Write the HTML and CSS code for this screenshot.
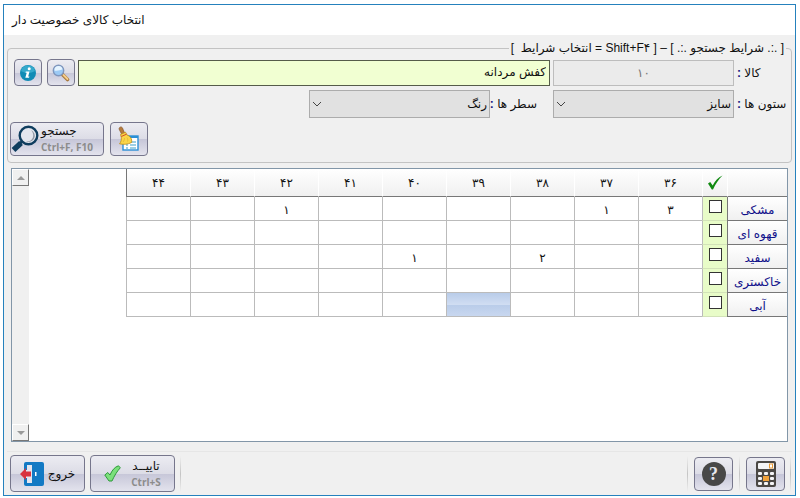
FILE: index.html
```html
<!DOCTYPE html>
<html lang="fa" dir="rtl">
<head>
  <meta charset="UTF-8">
  <meta name="viewport" content="width=device-width, initial-scale=1.0">
  <link rel="stylesheet" href="styles.css">
  <title>انتخاب کالای خصوصیت دار</title>
</head>
<body>
  <div class="window">
    <header class="title_bar">انتخاب کالای خصوصیت دار</header>

    <form class="content">
      <fieldset class="search_box">
        <legend>[ .:. شرایط جستجو .:. ] – [ Shift+F۴ = انتخاب شرایط &nbsp;]</legend>

        <div class="search_row">
          <label class="first_label" for="item_code">کالا <span class="colon">:</span></label>
          <input type="text" class="item_code" id="item_code" value="۱۰" disabled>
          <input type="text" class="item_name" aria-label="نام کالا" value="کفش مردانه">
          <button type="button" class="btn small_btn" aria-label="جستجوی کالا">
            <svg width="18" height="18" viewBox="0 0 18 18">
              <path d="M10.500 10.500l5 5" stroke="#a8793f" stroke-width="3.600" stroke-linecap="round"/>
              <path d="M11.500 11l4 4" stroke="#f6cf8c" stroke-width="1.800" stroke-linecap="round"/>
              <circle cx="6.500" cy="6.500" r="5.200" fill="#9ccaf5" stroke="#7f96bd" stroke-width="1.400"/>
              <path d="M2.500 6.500a4 4 0 0 1 8-1c-2 .2-5 1.800-8 1z" fill="#e6f4ff"/>
            </svg>
          </button>
          <button type="button" class="btn small_btn" aria-label="اطلاعات">
            <svg width="18" height="18" viewBox="0 0 18 18">
              <circle cx="9" cy="9" r="8" fill="#118bb5"/>
              <path d="M2 7a7.200 7.200 0 0 1 14 0c-4 2.500-10 2.500-14 0z" fill="#35a9cc"/>
              <circle cx="10.200" cy="4.700" r="1.500" fill="#fff"/>
              <path d="M6.800 7.500h3.700l-1.300 5h1.300l-.5 1.300H6.300l1.400-5h-1.200z" fill="#fff"/>
            </svg>
          </button>
        </div>

        <div class="search_row">
          <label class="first_label" for="columns">ستون ها <span class="colon">:</span></label>
          <div class="select_wrap">
            <select id="columns"><option>سایز</option></select>
            <svg class="chevron" width="10" height="6" viewBox="0 0 10 6"><path d="M1 1l4 4 4-4" fill="none" stroke="#444"/></svg>
          </div>
          <label class="second_label" for="rows">سطر ها <span class="colon">:</span></label>
          <div class="select_wrap">
            <select id="rows"><option>رنگ</option></select>
            <svg class="chevron" width="10" height="6" viewBox="0 0 10 6"><path d="M1 1l4 4 4-4" fill="none" stroke="#444"/></svg>
          </div>
        </div>

        <div class="search_actions">
          <button type="button" class="btn clear_btn" aria-label="پاک کردن">
            <svg width="24" height="26" viewBox="0 0 24 26">
              <rect x="6" y="10" width="15" height="14" fill="#fff" stroke="#2b8fd6" stroke-width="1.400"/>
              <path d="M6 10h15v2H6z" fill="#2b8fd6"/>
              <path d="M9 19h2M9 22h2M13 16h6M13 19h6M13 22h6" stroke="#3aa0c8" stroke-width="1.200"/>
              <path d="M2 3c0-2 2.500-3 3.500-1l2.500 6-2.800 1.300z" fill="#b57a3c" stroke="#7c4d24" stroke-width=".6"/>
              <path d="M3.500 8.500l5-2.300 1.500 2.800c3.500 1.200 5.200 4 4.600 7.500-3.500 1.900-8 2.300-12.100 1.300 1.700-1.900 2-4.500 1.800-6.500z" fill="#fad548" stroke="#bd8b1c" stroke-width=".8"/>
              <path d="M4.300 10.500L9.500 8.200" stroke="#d34b2a"/>
              <path d="M6 16c1-1 1.500-2.500 1.500-4M10.500 15.500c.5-1.500.3-2.500-.5-4" fill="none" stroke="#dba92f" stroke-width=".6"/>
            </svg>
          </button>
          <button type="button" class="btn search_btn">
            <span class="btn_text"><span>جستجو</span><span class="shortcut">Ctrl+F, F10</span></span>
            <svg width="28" height="28" viewBox="0 0 28 28">
              <path d="M2.500 25l7.500-7" stroke="#0f3d5e" stroke-width="5.500"/>
              <path d="M9 18.500l2-2" stroke="#0f3d5e" stroke-width="3"/>
              <circle cx="17.500" cy="10.500" r="8.800" fill="#e3e6ee" stroke="#0f3d5e" stroke-width="2.400"/>
              <path d="M20 5a6 6 0 0 1-5 11.500c6 1 10-6 5-11.500z" fill="#8f98a5"/>
            </svg>
          </button>
        </div>
      </fieldset>

      <div class="grid_panel">
        <div class="table_area">
          <table class="stock">
            <thead>
              <tr>
                <th class="name_col"></th>
                <th class="check_col">
                  <svg width="16" height="15" viewBox="0 0 16 15"><path d="M1 8.500L3.200 7l2.500 3.500C8 6 11 2.500 15.500.5 11.500 4.500 8.500 9 6 14.500H4.800z" fill="#118a11"/></svg>
                </th>
                <th>۳۶</th><th>۳۷</th><th>۳۸</th><th>۳۹</th><th>۴۰</th><th>۴۱</th><th>۴۲</th><th>۴۳</th><th>۴۴</th>
              </tr>
            </thead>
            <tbody>
              <tr>
                <th><label for="black">مشکی</label></th>
                <td class="check"><input type="checkbox" id="black"></td>
                <td>۳</td><td>۱</td><td></td><td></td><td></td><td></td><td>۱</td><td></td><td></td>
              </tr>
              <tr>
                <th><label for="brown">قهوه ای</label></th>
                <td class="check"><input type="checkbox" id="brown"></td>
                <td></td><td></td><td></td><td></td><td></td><td></td><td></td><td></td><td></td>
              </tr>
              <tr>
                <th><label for="white">سفید</label></th>
                <td class="check"><input type="checkbox" id="white"></td>
                <td></td><td></td><td>۲</td><td></td><td>۱</td><td></td><td></td><td></td><td></td>
              </tr>
              <tr>
                <th><label for="grey">خاکستری</label></th>
                <td class="check"><input type="checkbox" id="grey"></td>
                <td></td><td></td><td></td><td></td><td></td><td></td><td></td><td></td><td></td>
              </tr>
              <tr>
                <th><label for="blue">آبی</label></th>
                <td class="check"><input type="checkbox" id="blue"></td>
                <td></td><td></td><td></td><td class="selected"></td><td></td><td></td><td></td><td></td><td></td>
              </tr>
            </tbody>
          </table>
        </div>
        <div class="scrollbar">
          <button type="button" class="arrow" aria-label="بالا"><svg width="8" height="4" viewBox="0 0 8 4"><path d="M0 4l4-4 4 4z" fill="#999"/></svg></button>
          <button type="button" class="arrow" aria-label="پایین"><svg width="8" height="4" viewBox="0 0 8 4"><path d="M0 0l4 4 4-4z" fill="#999"/></svg></button>
        </div>
      </div>

      <footer class="toolbar">
        <span class="separator"></span>
        <button type="button" class="btn tool_btn" aria-label="ماشین حساب">
          <svg width="20" height="26" viewBox="0 0 20 26">
            <rect width="20" height="26" rx="2" fill="#4b4845"/>
            <rect x="2" y="2" width="16" height="6" rx="1" fill="#f4f4f6"/>
            <rect x="13.500" y="3" width="3" height="4" fill="#fff" stroke="#e99a35"/>
            <g fill="#f4f4f6">
              <rect x="2" y="11" width="4" height="3" rx="1"/><rect x="8" y="11" width="4" height="3" rx="1"/><rect x="14" y="11" width="4" height="3" rx="1"/>
              <rect x="2" y="16" width="4" height="3" rx="1"/><rect x="14" y="16" width="4" height="3" rx="1"/>
              <rect x="2" y="21" width="4" height="3" rx="1"/><rect x="8" y="21" width="4" height="3" rx="1"/><rect x="14" y="21" width="4" height="3" rx="1"/>
            </g>
            <rect x="7" y="15" width="6" height="5" fill="#f0a23c"/>
          </svg>
        </button>
        <span class="separator"></span>
        <button type="button" class="btn tool_btn"><span class="help">?</span></button>
        <span class="separator"></span>
        <span class="spacer"></span>
        <span class="separator"></span>
        <button type="submit" class="btn ok_btn">
          <span class="btn_text"><span>تاییــد</span><span class="shortcut">Ctrl+S</span></span>
          <svg width="17" height="17" viewBox="0 0 17 17"><path d="M.8 10l3-2.500 2.200 2.500C8 5.500 10.500 2 14.500.8l1.800 2C12.800 6.500 10.300 11 8 16H5z" fill="#7be07b" stroke="#2f9a3c"/></svg>
        </button>
        <button type="button" class="btn exit_btn">
          <span>خروج</span>
          <svg width="24" height="24" viewBox="0 0 24 24">
            <path d="M6 0h16a2 2 0 0 1 2 2v20a2 2 0 0 1-2 2H6a2 2 0 0 1-2-2V2a2 2 0 0 1 2-2z" fill="#1279c4"/>
            <path d="M7 3h5v18H7zM4 8h3v8H4z" fill="#e4e5ee"/>
            <path d="M15 10h1.500v4H15z" fill="#fff"/>
            <path d="M0 12l6-6v3.500h5v5H6V18z" fill="#d9333f"/>
          </svg>
        </button>
      </footer>
    </form>
  </div>
</body>
</html>
```
FILE: styles.css
```css
/* Basics */
* {
  box-sizing: border-box;
}

body {
  margin: 0;
  padding: 4px 4px 2px 3px;
  font-family: "Liberation Sans", "DejaVu Sans", sans-serif;
  font-size: 12px;
  line-height: 16px;
  color: #111;
  background-color: #fff;
}

input, select, button {
  font: inherit;
  color: inherit;
}

svg {
  display: block;
  flex: none;
}

/* Window */
.window {
  display: flex;
  flex-direction: column;
  min-height: calc(100vh - 6px);
  border: 1px solid #2581bd;
  background-color: #f0f0f0;
}

.title_bar {
  direction: ltr;
  padding: 7px 8px;
  background-color: #fff;
}

.content {
  display: flex;
  flex-direction: column;
  flex: 1;
  padding: 5px 3px 2px;
}

/* Search conditions */
.search_box {
  display: flex;
  flex-direction: column;
  gap: 4px;
  min-width: 0;
  margin: 0;
  padding: 3px 4px 6px 2px;
  border: 1px solid #c3c3c3;
  border-radius: 4px;
}

.search_box legend {
  margin-right: 1px;
  padding: 0 2px;
}

.search_row {
  display: flex;
  align-items: center;
  gap: 3px;
  padding-left: 4px;
}

.first_label {
  width: 50px;
  text-align: left;
  white-space: nowrap;
}

.second_label {
  width: 57px;
  padding-right: 13px;
  white-space: nowrap;
}

.colon {
  font-weight: bold;
  color: #1a1a80;
}

.item_code, .select_wrap {
  width: 181px;
}

.item_code {
  height: 26px;
  border: 1px solid #bdbdbd;
  background-color: #ebebeb;
  color: #777;
  text-align: center;
}

.item_name {
  flex: 1;
  min-width: 0;
  height: 26px;
  padding: 0 3px 2px;
  border: 1px solid #565c4a;
  background-color: #f1ffd2;
}

.select_wrap {
  position: relative;
}

.select_wrap select {
  width: 100%;
  height: 28px;
  padding: 0 2px;
  border: 1px solid #acacac;
  border-radius: 0;
  background-color: #e1e1e1;
  appearance: none;
}

.chevron {
  position: absolute;
  left: 3px;
  top: 11px;
  pointer-events: none;
}

.search_actions {
  display: flex;
  justify-content: flex-end;
  gap: 6px;
}

/* Buttons */
.btn {
  display: flex;
  justify-content: center;
  align-items: center;
  padding: 0;
  border: 1px solid #76768c;
  border-radius: 4px;
  background: linear-gradient(#ececf2, #dcdce6 50%, #c6c6d8 51%, #e3e3ed);
  cursor: pointer;
}

.btn_text {
  display: flex;
  flex-direction: column;
}

.shortcut {
  direction: ltr;
  font-family: "Open Sans", sans-serif;
  font-size: 10px;
  font-weight: bold;
  color: #8c8c8c;
}

.small_btn {
  width: 28px;
  height: 27px;
}

.small_btn + .small_btn {
  margin-right: 2px;
}

.search_btn {
  justify-content: flex-end;
  gap: 2px;
  width: 94px;
  height: 34px;
}

.search_btn .btn_text {
  align-items: flex-end;
}

.clear_btn {
  width: 38px;
  height: 34px;
}

/* Stock grid */
.grid_panel {
  display: flex;
  flex: 1;
  margin: 5px 4px 0;
  border: 1px solid #8296a8;
  background-color: #fff;
}

.table_area {
  flex: 1;
  min-width: 0;
  overflow: hidden;
}

.stock {
  width: 661px;
  table-layout: fixed;
  border-collapse: separate;
  border-spacing: 0;
  text-align: center;
}

.stock th, .stock td {
  height: 24px;
  padding: 2px 0 0;
  font-weight: normal;
}

.stock thead th {
  height: 28px;
  padding: 0;
  border-left: 1px solid #fff;
  border-bottom: 1px solid #777;
  background: linear-gradient(#fff, #f0f0f0);
}

.stock thead th:last-child {
  border-left-color: #777;
}

.stock .name_col {
  width: 60px;
}

.stock .check_col {
  width: 25px;
}

.check_col svg {
  margin: 0 auto;
}

.stock tbody th {
  border-left: 1px solid #777;
  border-bottom: 1px solid #777;
  background: linear-gradient(#fff, #f0f0f0);
  color: #10108a;
}

.stock td {
  border-left: 1px solid #bbb;
  border-bottom: 1px solid #bbb;
}

.stock .check {
  padding: 0;
  background-color: #e8fcc8;
  border-bottom-color: #d2e2b8;
}

.check input {
  display: block;
  width: 13px;
  height: 13px;
  margin: 0 auto 4px;
  border: 1px solid #333;
  background-color: #fff;
  appearance: none;
}

.check input:checked {
  background-color: #118a11;
}

.stock .selected {
  background: linear-gradient(#b9cce9, #d0ddf2 50%, #b9cce9 51%, #c8d7ef);
}

.scrollbar {
  display: flex;
  flex-direction: column;
  justify-content: space-between;
  width: 17px;
  background-color: #f0f0f0;
}

.arrow {
  display: flex;
  justify-content: center;
  align-items: center;
  width: 17px;
  height: 17px;
  padding: 0;
  border: 1px solid;
  border-color: #fff #777 #777 #fff;
  background-color: #f0f0f0;
}

/* Bottom toolbar */
.toolbar {
  display: flex;
  align-items: center;
  gap: 5px;
  margin-top: 9px;
  padding: 3px 1px 1px 3px;
  border-top: 1px solid #e6e6e6;
}

.spacer {
  flex: 1;
}

.separator {
  width: 1px;
  height: 36px;
  background: linear-gradient(#f0f0f0, #c4c4c4, #f0f0f0);
}

.tool_btn {
  width: 39px;
  height: 34px;
}

.tool_btn + .separator {
  margin: 0 1px;
}

.help {
  width: 24px;
  height: 24px;
  border-radius: 50%;
  background-color: #484848;
  color: #e8e8ee;
  font-family: "Liberation Serif", serif;
  font-size: 18px;
  font-weight: bold;
  line-height: 24px;
}

.ok_btn {
  gap: 10px;
  width: 85px;
  height: 37px;
}

.exit_btn {
  gap: 4px;
  width: 75px;
  height: 37px;
}
```
